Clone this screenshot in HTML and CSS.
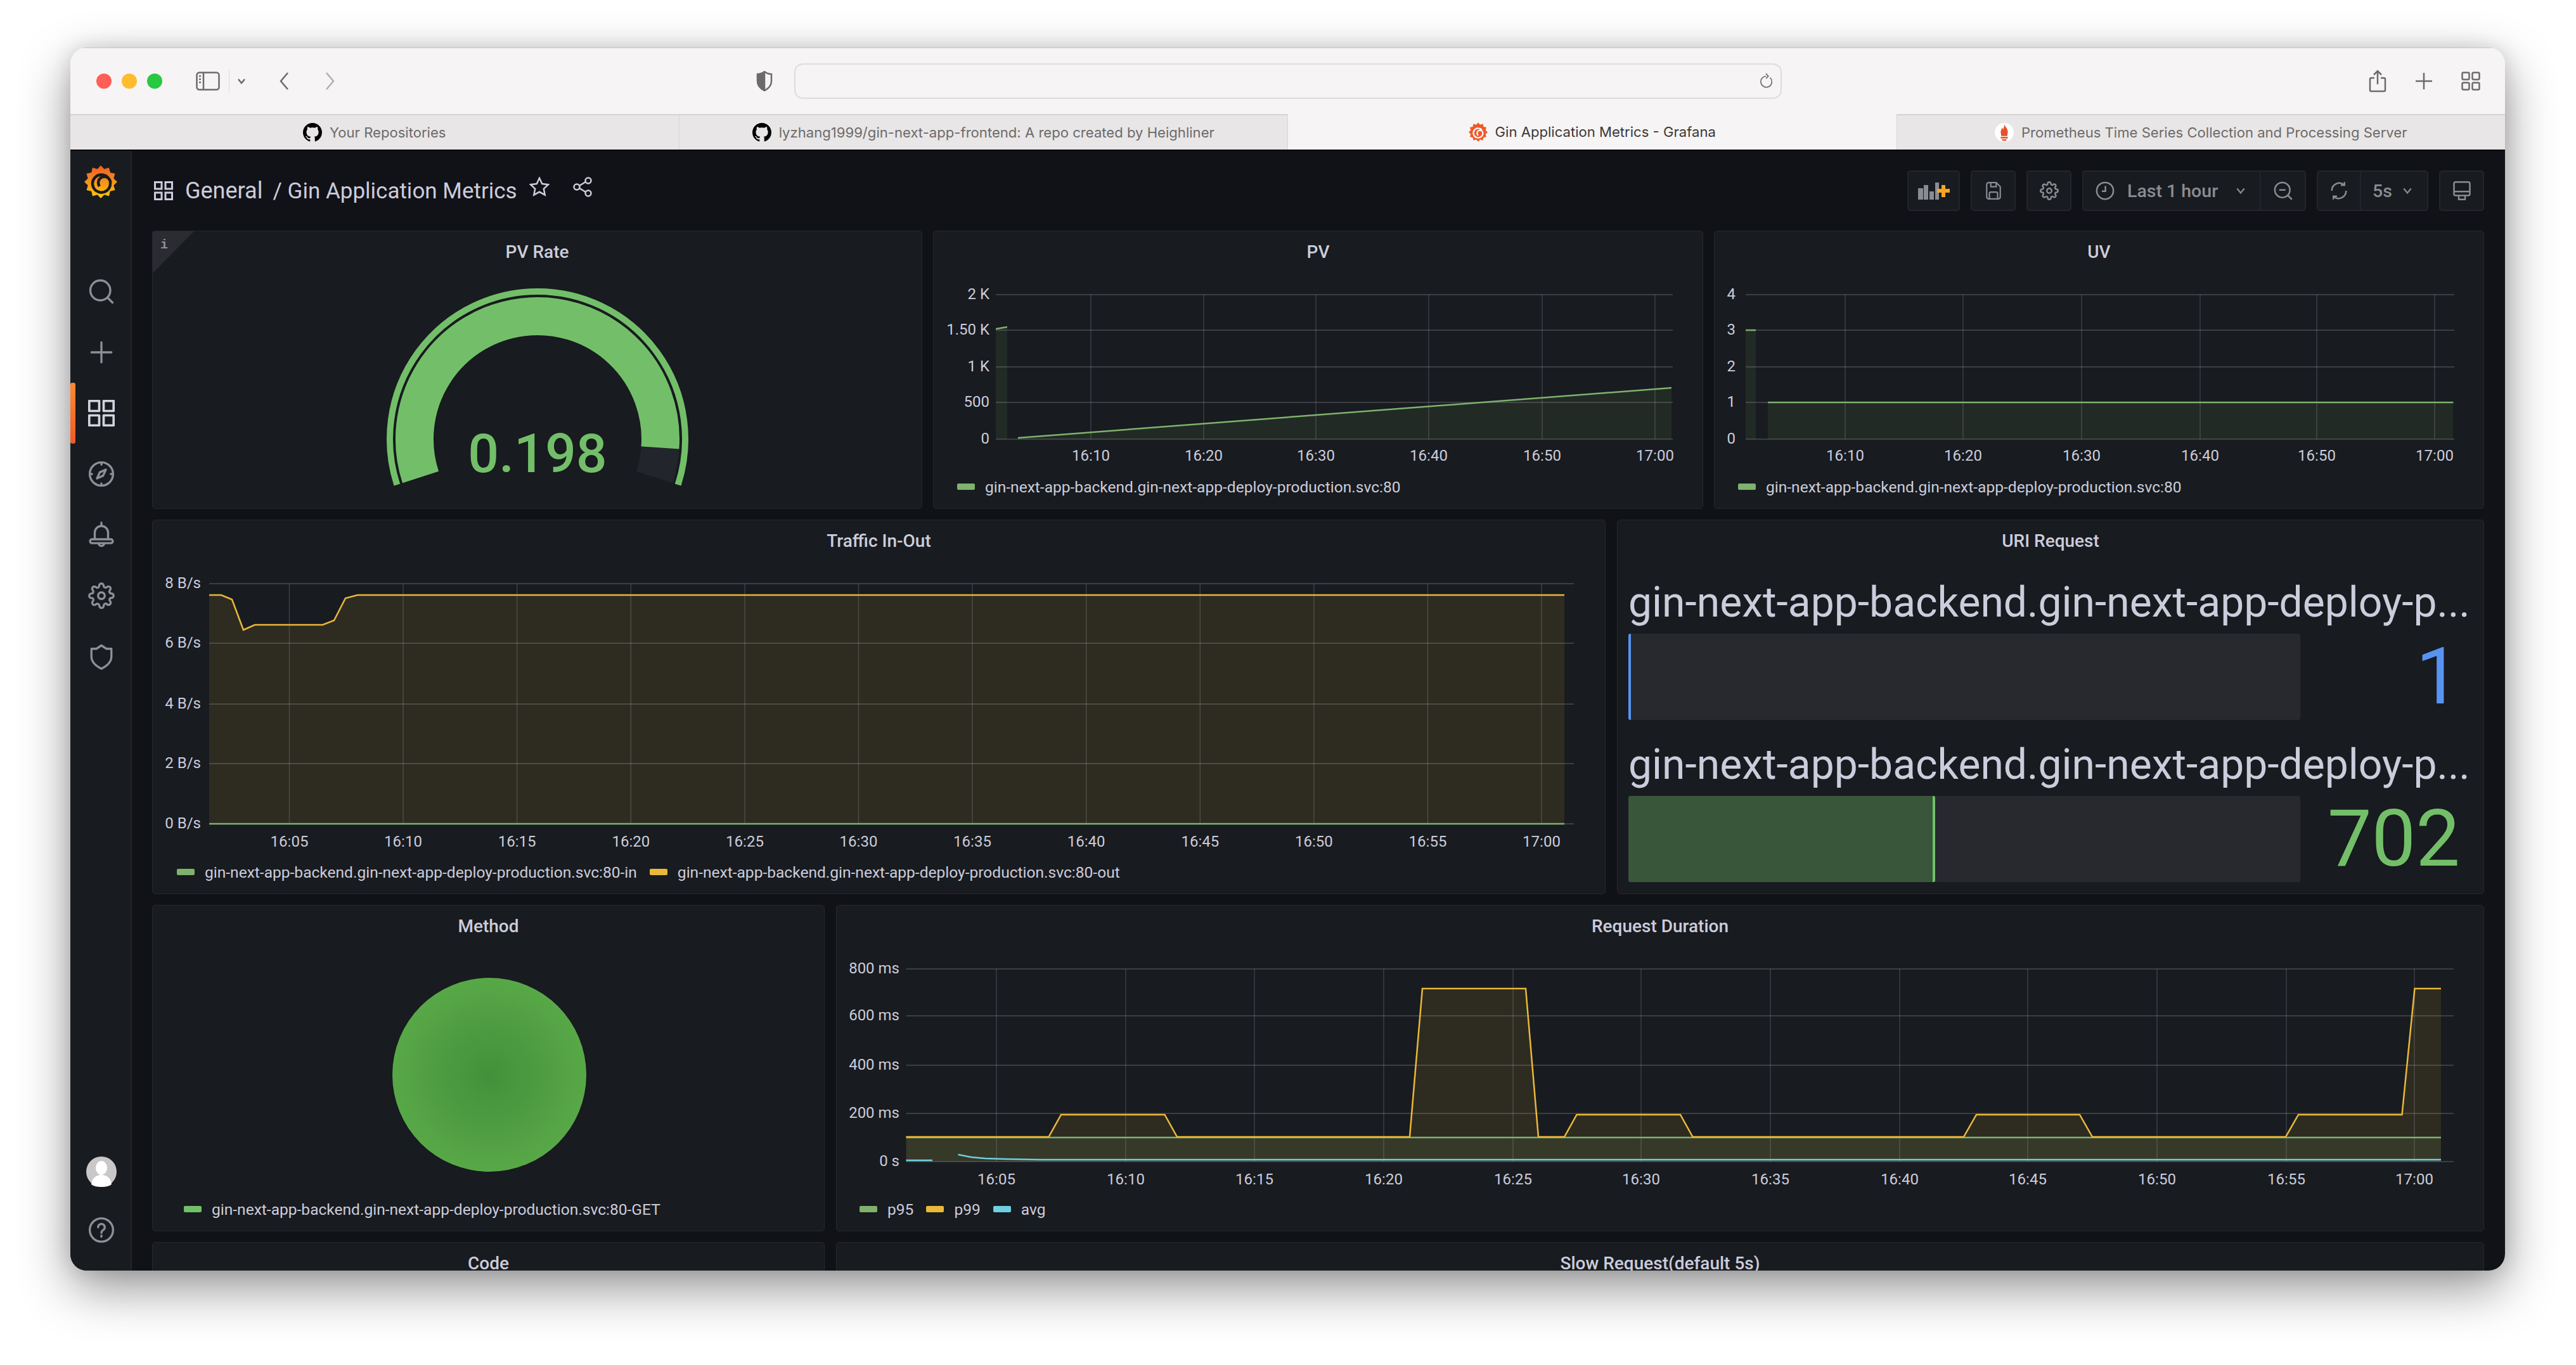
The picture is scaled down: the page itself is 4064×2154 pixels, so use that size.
FILE: index.html

```html
<!DOCTYPE html>
<html lang="en">
<head>
    <meta charset="UTF-8">
    <title>Gin Application Metrics - Grafana</title>
    <link rel="stylesheet" href="styles.css">
</head>
<body>
<div class="window">
    <!-- browser toolbar -->
    <div class="toolbar">
        <span class="light red"></span>
        <span class="light yellow"></span>
        <span class="light green"></span>
        <svg class="tb-sidebar" viewBox="0 0 38 30"><rect x="1.5" y="1.5" width="35" height="27" rx="4"/><path d="M12 2v26M5 7h3M5 12h3M5 17h3"/></svg>
        <span class="tb-sep"></span>
        <svg class="tb-chev" viewBox="0 0 14 10"><path d="M2 2l5 6 5-6"/></svg>
        <svg class="tb-back" viewBox="0 0 18 30"><path d="M15 2L4 15l11 13"/></svg>
        <svg class="tb-forward" viewBox="0 0 18 30"><path d="M3 2l11 13L3 28"/></svg>
        <svg class="tb-shield" viewBox="0 0 26 32"><path class="solid" d="M13 1C9 4 5 5 2 5v11c0 7 5 12 11 15z"/><path d="M13 1c4 3 8 4 11 4v11c0 7-5 12-11 15"/></svg>
        <div class="address">
            <svg class="tb-reload" viewBox="0 0 24 28"><path d="M18 8a9.500 9.500 0 1 1-7-2.500M11 1l4 4.500-4 4"/></svg>
        </div>
        <svg class="tb-share" viewBox="0 0 28 36"><path d="M14 23V2M8 8l6-6 6 6M9 13H4a2 2 0 0 0-2 2v17a2 2 0 0 0 2 2h20a2 2 0 0 0 2-2V15a2 2 0 0 0-2-2h-5"/></svg>
        <svg class="tb-plus" viewBox="0 0 30 30"><path d="M15 2v26M2 15h26"/></svg>
        <svg class="tb-grid" viewBox="0 0 30 30"><rect x="1.500" y="1.500" width="11" height="11" rx="2"/><rect x="17.500" y="1.500" width="11" height="11" rx="2"/><rect x="1.500" y="17.500" width="11" height="11" rx="2"/><rect x="17.500" y="17.500" width="11" height="11" rx="2"/></svg>
    </div>

    <!-- browser tabs -->
    <div class="tabs">
        <div class="tab">
            <svg class="tab-icon" viewBox="0 0 16 16"><path d="M8 0C3.58 0 0 3.58 0 8c0 3.54 2.29 6.53 5.47 7.59.4.07.55-.17.55-.38 0-.19-.01-.82-.01-1.49-2.01.37-2.53-.49-2.69-.94-.09-.23-.48-.94-.82-1.13-.28-.15-.68-.52-.01-.53.63-.01 1.08.58 1.23.82.72 1.21 1.87.87 2.33.66.07-.52.28-.87.51-1.07-1.78-.2-3.64-.89-3.64-3.95 0-.87.31-1.59.82-2.15-.08-.2-.36-1.02.08-2.12 0 0 .67-.21 2.2.82.64-.18 1.32-.27 2-.27.68 0 1.36.09 2 .27 1.53-1.04 2.2-.82 2.2-.82.44 1.1.16 1.92.08 2.12.51.56.82 1.27.82 2.15 0 3.07-1.87 3.75-3.65 3.95.29.25.54.73.54 1.48 0 1.07-.01 1.93-.01 2.2 0 .21.15.46.55.38A8.013 8.013 0 0016 8c0-4.420-3.580-8-8-8z"/></svg>
            Your Repositories
        </div>
        <div class="tab">
            <svg class="tab-icon" viewBox="0 0 16 16"><path d="M8 0C3.58 0 0 3.58 0 8c0 3.54 2.29 6.53 5.47 7.59.4.07.55-.17.55-.38 0-.19-.01-.82-.01-1.49-2.01.37-2.53-.49-2.69-.94-.09-.23-.48-.94-.82-1.13-.28-.15-.68-.52-.01-.53.63-.01 1.08.58 1.23.82.72 1.21 1.87.87 2.33.66.07-.52.28-.87.51-1.07-1.78-.2-3.64-.89-3.64-3.95 0-.87.31-1.59.82-2.15-.08-.2-.36-1.02.08-2.12 0 0 .67-.21 2.2.82.64-.18 1.32-.27 2-.27.68 0 1.36.09 2 .27 1.53-1.04 2.2-.82 2.2-.82.44 1.1.16 1.92.08 2.12.51.56.82 1.27.82 2.15 0 3.07-1.87 3.75-3.65 3.95.29.25.54.73.54 1.48 0 1.07-.01 1.93-.01 2.2 0 .21.15.46.55.38A8.013 8.013 0 0016 8c0-4.420-3.580-8-8-8z"/></svg>
            lyzhang1999/gin-next-app-frontend: A repo created by Heighliner
        </div>
        <div class="tab active">
            <svg class="tab-logo" viewBox="0 0 52 54"><polygon class="logo-flat" points="26,2 31.400,7.700 39,5.500 40.800,13.200 48.500,15 46.300,22.600 52,28 46.300,33.400 48.500,41 40.800,42.800 39,50.500 31.400,48.300 26,54 20.600,48.300 13,50.500 11.200,42.800 3.500,41 5.700,33.400 0,28 5.700,22.600 3.500,15 11.200,13.200 13,5.500 20.600,7.700"/><path class="logo-swirl-flat" d="M36 22A13 13 0 1 0 39 31A8 8 0 1 0 26 37"/></svg>
            Gin Application Metrics - Grafana
        </div>
        <div class="tab">
            <svg class="tab-icon" viewBox="0 0 32 32"><circle class="prom-bg" cx="16" cy="16" r="16"/><path class="prom-flame" d="M16 2c1 4 6 7 6 13 0 3-1 5-1 7H11c0-2-1-4-1-7 0-3 2-4 2-7 1 1 2 2 2 3 1-2 2-5 2-9zM10 23.500h12v2.500H10zM12 27.500h8l-1 2.500h-6z"/></svg>
            Prometheus Time Series Collection and Processing Server
        </div>
    </div>

    <div class="app">
        <!-- grafana side menu -->
        <nav class="sidebar">
            <div class="side-logo">
                <svg class="logo" viewBox="0 0 52 54">
                    <defs><linearGradient id="logoGrad" x1="0" y1="0" x2="0" y2="1"><stop offset="0" stop-color="#f05a28"/><stop offset="1" stop-color="#fbca0a"/></linearGradient></defs>
                    <polygon fill="url(#logoGrad)" points="26,2 31.400,7.700 39,5.500 40.800,13.200 48.500,15 46.300,22.600 52,28 46.300,33.400 48.500,41 40.800,42.800 39,50.500 31.400,48.300 26,54 20.600,48.300 13,50.500 11.200,42.800 3.500,41 5.700,33.400 0,28 5.700,22.600 3.500,15 11.200,13.200 13,5.500 20.600,7.700"/>
                    <path class="logo-hole" d="M38 22A14 14 0 1 0 41 31A9.500 9.500 0 1 0 24 35"/>
                </svg>
            </div>
            <div class="side-item"><svg class="side-icon" viewBox="0 0 24 24"><circle cx="11" cy="11" r="9"/><path d="M17.500 17.500L22 22"/></svg></div>
            <div class="side-item"><svg class="side-icon" viewBox="0 0 24 24"><path d="M12 3v18M3 12h18"/></svg></div>
            <div class="side-item active"><svg class="side-icon" viewBox="0 0 24 24"><rect x="1" y="1" width="9" height="9"/><rect x="14" y="1" width="9" height="9"/><rect x="1" y="14" width="9" height="9"/><rect x="14" y="14" width="9" height="9"/></svg></div>
            <div class="side-item"><svg class="side-icon" viewBox="0 0 24 24"><circle cx="12" cy="12" r="10.500"/><path d="M16 8l-2.500 5.500L8 16l2.500-5.500zM12 1.500v2M12 20.500v2M1.500 12h2M20.500 12h2"/></svg></div>
            <div class="side-item"><svg class="side-icon" viewBox="0 0 24 24"><path d="M12 1v2.500M6 16v-6a6 6 0 0 1 12 0v6M3.500 16h17a1.500 1.500 0 0 1 0 3.500h-17a1.500 1.500 0 0 1 0-3.500zM9.500 19.500a2.500 2.500 0 0 0 5 0"/></svg></div>
            <div class="side-item"><svg class="side-icon" viewBox="0 0 24 24"><circle cx="12" cy="12" r="3"/><path d="M19.400 15a1.650 1.650 0 0 0 .33 1.820l.06.06a2 2 0 0 1 0 2.830 2 2 0 0 1-2.830 0l-.06-.06a1.650 1.650 0 0 0-1.820-.33 1.650 1.650 0 0 0-1 1.510V21a2 2 0 0 1-2 2 2 2 0 0 1-2-2v-.09A1.650 1.650 0 0 0 9 19.400a1.650 1.650 0 0 0-1.820.33l-.06.06a2 2 0 0 1-2.830 0 2 2 0 0 1 0-2.830l.06-.06a1.650 1.650 0 0 0 .33-1.820 1.650 1.650 0 0 0-1.510-1H3a2 2 0 0 1-2-2 2 2 0 0 1 2-2h.09A1.650 1.650 0 0 0 4.600 9a1.650 1.650 0 0 0-.33-1.820l-.06-.06a2 2 0 0 1 0-2.830 2 2 0 0 1 2.830 0l.06.06a1.650 1.650 0 0 0 1.820.33H9a1.650 1.650 0 0 0 1-1.510V3a2 2 0 0 1 2-2 2 2 0 0 1 2 2v.09a1.650 1.650 0 0 0 1 1.510 1.650 1.650 0 0 0 1.820-.33l.06-.06a2 2 0 0 1 2.830 0 2 2 0 0 1 0 2.830l-.06.06a1.650 1.650 0 0 0-.33 1.820V9a1.650 1.650 0 0 0 1.510 1H21a2 2 0 0 1 2 2 2 2 0 0 1-2 2h-.09a1.650 1.650 0 0 0-1.510 1z"/></svg></div>
            <div class="side-item"><svg class="side-icon" viewBox="0 0 24 24"><path d="M12 23c-6-3-9-7-9-11V5l4.500 0L12 2l4.500 3L21 5v7c0 4-3 8-9 11z"/></svg></div>
            <div class="side-spacer"></div>
            <div class="side-item side-avatar"><svg class="avatar" viewBox="0 0 48 48"><circle class="avatar-bg" cx="24" cy="24" r="24"/><ellipse class="avatar-fg" cx="24" cy="18" rx="9" ry="11"/><path class="avatar-fg" d="M8 44c1-10 8-15 16-15s15 5 16 15c-4 3-10 4-16 4s-12-1-16-4z"/></svg></div>
            <div class="side-item"><svg class="side-icon" viewBox="0 0 24 24"><circle cx="12" cy="12" r="10.500"/><path d="M9 9.500a3 3 0 1 1 4.500 2.600c-1 .6-1.500 1.200-1.500 2.400M12 17v1"/></svg></div>
        </nav>

        <div class="main">
            <!-- dashboard header -->
            <header class="dash-header">
                <svg class="head-apps" viewBox="0 0 30 30"><rect x="1.500" y="1.500" width="10.500" height="10.500"/><rect x="18" y="1.500" width="10.500" height="10.500"/><rect x="1.500" y="18" width="10.500" height="10.500"/><rect x="18" y="18" width="10.500" height="10.500"/></svg>
                <span class="crumb">General</span>
                <span class="crumb-title">/ Gin Application Metrics</span>
                <svg class="head-star" viewBox="0 0 32 32"><path d="M16 2l4.200 9 9.800 1.200-7.200 6.700 1.900 9.700L16 23.800l-8.700 4.800 1.900-9.700L2 12.200 11.800 11z"/></svg>
                <svg class="head-share" viewBox="0 0 30 32"><circle cx="6" cy="16" r="4.500"/><circle cx="24" cy="6" r="4.500"/><circle cx="24" cy="26" r="4.500"/><path d="M10 14l10-6M10 18l10 6"/></svg>
                <div class="head-actions">
                    <div class="btn btn-add">
                        <svg class="btn-icon-add" viewBox="0 0 50 28"><path class="add-bars" d="M0 10h8v18H0zM9 5h7v23H9zM18 15h7v13h-7zM27 1h6v27h-6z"/><path class="add-plus" d="M37 5h6v6h7v6h-7v7h-6v-7h-7v-6h7z"/></svg>
                    </div>
                    <div class="btn btn-sq"><svg class="btn-icon" viewBox="0 0 24 28"><path d="M2 5a3 3 0 0 1 3-3h11l6 6v15a3 3 0 0 1-3 3H5a3 3 0 0 1-3-3zM8 2v6h8V2M6 26v-8a2 2 0 0 1 2-2h8a2 2 0 0 1 2 2v8"/></svg></div>
                    <div class="btn btn-sq"><svg class="btn-icon" viewBox="0 0 24 24"><circle cx="12" cy="12" r="3"/><path d="M19.400 15a1.650 1.650 0 0 0 .33 1.820l.06.06a2 2 0 0 1 0 2.830 2 2 0 0 1-2.830 0l-.06-.06a1.650 1.650 0 0 0-1.820-.33 1.650 1.650 0 0 0-1 1.510V21a2 2 0 0 1-2 2 2 2 0 0 1-2-2v-.09A1.650 1.650 0 0 0 9 19.400a1.650 1.650 0 0 0-1.820.33l-.06.06a2 2 0 0 1-2.830 0 2 2 0 0 1 0-2.830l.06-.06a1.650 1.650 0 0 0 .33-1.820 1.650 1.650 0 0 0-1.510-1H3a2 2 0 0 1-2-2 2 2 0 0 1 2-2h.09A1.650 1.650 0 0 0 4.600 9a1.650 1.650 0 0 0-.33-1.820l-.06-.06a2 2 0 0 1 0-2.830 2 2 0 0 1 2.830 0l.06.06a1.650 1.650 0 0 0 1.820.33H9a1.650 1.650 0 0 0 1-1.510V3a2 2 0 0 1 2-2 2 2 0 0 1 2 2v.09a1.650 1.650 0 0 0 1 1.510 1.650 1.650 0 0 0 1.820-.33l.06-.06a2 2 0 0 1 2.830 0 2 2 0 0 1 0 2.830l-.06.06a1.650 1.650 0 0 0-.33 1.820V9a1.650 1.650 0 0 0 1.510 1H21a2 2 0 0 1 2 2 2 2 0 0 1-2 2h-.09a1.650 1.650 0 0 0-1.510 1z"/></svg></div>
                    <div class="btn-group">
                        <div class="btn-part btn-time">
                            <svg class="btn-icon" viewBox="0 0 24 24"><circle cx="12" cy="12" r="10.500"/><path d="M12.500 6v6.500H8"/></svg>
                            <span class="btn-text">Last 1 hour</span>
                            <svg class="btn-chev" viewBox="0 0 14 10"><path d="M2 2l5 6 5-6"/></svg>
                        </div>
                        <div class="btn-part btn-zoom"><svg class="btn-icon" viewBox="0 0 24 24"><circle cx="11" cy="11" r="9.500"/><path d="M18 18l5 5M7 11h8"/></svg></div>
                    </div>
                    <div class="btn-group">
                        <div class="btn-part btn-refresh"><svg class="btn-icon" viewBox="0 0 24 24"><path d="M21 12a9.500 9.500 0 0 1-15.500 7.500M3 12A9.500 9.500 0 0 1 18.500 4.500M5 23v-4h4.500M19 1v4h-4.500"/></svg></div>
                        <div class="btn-part btn-interval">
                            <span class="btn-text">5s</span>
                            <svg class="btn-chev" viewBox="0 0 14 10"><path d="M2 2l5 6 5-6"/></svg>
                        </div>
                    </div>
                    <div class="btn btn-sq"><svg class="btn-icon" viewBox="0 0 24 24"><path d="M4 1h16a2 2 0 0 1 2 2v13a2 2 0 0 1-2 2H4a2 2 0 0 1-2-2V3a2 2 0 0 1 2-2zM2 13h20M8 18v5h8v-5"/></svg></div>
                </div>
            </header>

            <!-- row 1 -->
            <div class="row row-top">
                <section class="panel">
                    <span class="info-corner"></span>
                    <span class="info-mark">i</span>
                    <h3 class="panel-title">PV Rate</h3>
                    <svg class="chart chart-gauge" viewBox="241 431 1213 371">
                        <path class="gauge-thresh" d="M626.400 765A233 233 0 1 1 1069.600 765"/>
                        <path class="gauge-rest" d="M1041.500 706.500A194 194 0 0 1 1032.500 753"/>
                        <path class="gauge-value-arc" d="M663.500 753A194 194 0 1 1 1041.500 706.500"/>
                        <text class="gauge-value" x="848" y="745">0.198</text>
                    </svg>
                </section>

                <section class="panel">
                    <h3 class="panel-title">PV</h3>
                    <svg class="chart chart-small" viewBox="1473 431 1213 314">
                        <path class="fill-green" d="M1606 691L2637 612V693H1606zM1571 519L1589 516V693H1571z"/>
                        <path class="grid-h" d="M1571 465H2639M1571 521H2639M1571 579H2639M1571 635H2639M1571 693H2639"/>
                        <path class="grid-v" d="M1721 465V693M1899 465V693M2076 465V693M2254 465V693M2433 465V693M2611 465V693"/>
                        <path class="line-green" d="M1606 691L2637 612M1571 519L1589 516"/>
                        <text class="axis-y" x="1561" y="472">2 K</text>
                        <text class="axis-y" x="1561" y="528">1.50 K</text>
                        <text class="axis-y" x="1561" y="586">1 K</text>
                        <text class="axis-y" x="1561" y="642">500</text>
                        <text class="axis-y" x="1561" y="700">0</text>
                        <text class="axis-x" x="1721" y="727">16:10</text>
                        <text class="axis-x" x="1899" y="727">16:20</text>
                        <text class="axis-x" x="2076" y="727">16:30</text>
                        <text class="axis-x" x="2254" y="727">16:40</text>
                        <text class="axis-x" x="2433" y="727">16:50</text>
                        <text class="axis-x" x="2611" y="727">17:00</text>
                    </svg>
                    <div class="legend legend-pv">
                        <span class="swatch sw-green"></span>
                        <span>gin-next-app-backend.gin-next-app-deploy-production.svc:80</span>
                    </div>
                </section>

                <section class="panel">
                    <h3 class="panel-title">UV</h3>
                    <svg class="chart chart-small" viewBox="2705 431 1213 314">
                        <path class="fill-green" d="M2789 635H3870V693H2789zM2754 521H2770V693H2754z"/>
                        <path class="grid-h" d="M2754 465H3872M2754 521H3872M2754 579H3872M2754 635H3872M2754 693H3872"/>
                        <path class="grid-v" d="M2911 465V693M3097 465V693M3284 465V693M3471 465V693M3655 465V693M3841 465V693"/>
                        <path class="line-green" d="M2789 635H3870M2754 521H2770"/>
                        <text class="axis-y" x="2738" y="472">4</text>
                        <text class="axis-y" x="2738" y="528">3</text>
                        <text class="axis-y" x="2738" y="586">2</text>
                        <text class="axis-y" x="2738" y="642">1</text>
                        <text class="axis-y" x="2738" y="700">0</text>
                        <text class="axis-x" x="2911" y="727">16:10</text>
                        <text class="axis-x" x="3097" y="727">16:20</text>
                        <text class="axis-x" x="3284" y="727">16:30</text>
                        <text class="axis-x" x="3471" y="727">16:40</text>
                        <text class="axis-x" x="3655" y="727">16:50</text>
                        <text class="axis-x" x="3841" y="727">17:00</text>
                    </svg>
                    <div class="legend legend-pv">
                        <span class="swatch sw-green"></span>
                        <span>gin-next-app-backend.gin-next-app-deploy-production.svc:80</span>
                    </div>
                </section>
            </div>

            <!-- row 2 -->
            <div class="row row-mid">
                <section class="panel">
                    <h3 class="panel-title">Traffic In-Out</h3>
                    <svg class="chart chart-traffic" viewBox="241 887 2291 465">
                        <path class="fill-yellow" d="M330 939H349L366 946L384 994L402 986H509L527 979L545 944L564 939H2468V1300H330z"/>
                        <path class="grid-h" d="M330 921H2483M330 1015H2483M330 1111H2483M330 1205H2483"/>
                        <path class="grid-v" d="M456.500 921V1300M636 921V1300M815.700 921V1300M995.300 921V1300M1175 921V1300M1354.500 921V1300M1534 921V1300M1713.700 921V1300M1893.300 921V1300M2072.900 921V1300M2252.500 921V1300M2432 921V1300"/>
                        <path class="line-yellow" d="M330 939H349L366 946L384 994L402 986H509L527 979L545 944L564 939H2468"/>
                        <path class="line-green" d="M330 1300H2468"/>
                        <path class="grid-h" d="M2468 1300H2483"/>
                        <text class="axis-y" x="317" y="928">8 B/s</text>
                        <text class="axis-y" x="317" y="1022">6 B/s</text>
                        <text class="axis-y" x="317" y="1118">4 B/s</text>
                        <text class="axis-y" x="317" y="1212">2 B/s</text>
                        <text class="axis-y" x="317" y="1307">0 B/s</text>
                        <text class="axis-x" x="456.500" y="1336">16:05</text>
                        <text class="axis-x" x="636" y="1336">16:10</text>
                        <text class="axis-x" x="815.700" y="1336">16:15</text>
                        <text class="axis-x" x="995.300" y="1336">16:20</text>
                        <text class="axis-x" x="1175" y="1336">16:25</text>
                        <text class="axis-x" x="1354.500" y="1336">16:30</text>
                        <text class="axis-x" x="1534" y="1336">16:35</text>
                        <text class="axis-x" x="1713.700" y="1336">16:40</text>
                        <text class="axis-x" x="1893.300" y="1336">16:45</text>
                        <text class="axis-x" x="2072.900" y="1336">16:50</text>
                        <text class="axis-x" x="2252.500" y="1336">16:55</text>
                        <text class="axis-x" x="2432" y="1336">17:00</text>
                    </svg>
                    <div class="legend legend-traffic">
                        <span class="swatch sw-green"></span>
                        <span>gin-next-app-backend.gin-next-app-deploy-production.svc:80-in</span>
                        <span class="swatch sw-yellow"></span>
                        <span>gin-next-app-backend.gin-next-app-deploy-production.svc:80-out</span>
                    </div>
                </section>

                <section class="panel">
                    <h3 class="panel-title">URI Request</h3>
                    <div class="bar-list">
                        <div class="bar-item">
                            <div class="bar-label">gin-next-app-backend.gin-next-app-deploy-p...</div>
                            <div class="bar-row">
                                <div class="bar-track"><div class="bar-fill bar-blue"></div></div>
                                <div class="bar-value value-blue">1</div>
                            </div>
                        </div>
                        <div class="bar-item">
                            <div class="bar-label">gin-next-app-backend.gin-next-app-deploy-p...</div>
                            <div class="bar-row">
                                <div class="bar-track"><div class="bar-fill bar-green" style="width: 45.700%"></div></div>
                                <div class="bar-value value-green">702</div>
                            </div>
                        </div>
                    </div>
                </section>
            </div>

            <!-- row 3 -->
            <div class="row row-low">
                <section class="panel">
                    <h3 class="panel-title">Method</h3>
                    <svg class="chart chart-pie" viewBox="241 1495 1059 387">
                        <defs><radialGradient id="pieGrad"><stop offset="0" stop-color="#42903a"/><stop offset="0.650" stop-color="#519f43"/><stop offset="1" stop-color="#58a847"/></radialGradient></defs>
                        <circle fill="url(#pieGrad)" cx="772" cy="1696" r="153"/>
                    </svg>
                    <div class="legend legend-method">
                        <span class="swatch sw-pie"></span>
                        <span>gin-next-app-backend.gin-next-app-deploy-production.svc:80-GET</span>
                    </div>
                </section>

                <section class="panel">
                    <h3 class="panel-title">Request Duration</h3>
                    <svg class="chart chart-duration" viewBox="1320 1495 2598 389">
                        <path class="fill-yellow" d="M1429.500 1794H1654.500L1674 1759H1837.500L1857 1794H2224L2244 1560H2407L2427 1794H2468L2487.500 1759H2651L2670.500 1794H3098L3118 1759H3281L3301 1794H3606L3626 1759H3789.500L3809.500 1560H3851V1833H1429.500z"/>
                        <path class="fill-green" d="M1429.500 1795H3851V1833H1429.500z"/>
                        <path class="grid-h" d="M1429.500 1529H3871M1429.500 1603H3871M1429.500 1681H3871M1429.500 1757H3871M1429.500 1833H3871"/>
                        <path class="grid-v" d="M1572 1529V1833M1776 1529V1833M1979 1529V1833M2183 1529V1833M2387 1529V1833M2589 1529V1833M2793 1529V1833M2997 1529V1833M3199 1529V1833M3403 1529V1833M3607 1529V1833M3809 1529V1833"/>
                        <path class="line-green" d="M1429.500 1795H3851"/>
                        <path class="line-yellow" d="M1429.500 1794H1654.500L1674 1759H1837.500L1857 1794H2224L2244 1560H2407L2427 1794H2468L2487.500 1759H2651L2670.500 1794H3098L3118 1759H3281L3301 1794H3606L3626 1759H3789.500L3809.500 1560H3851"/>
                        <path class="line-cyan" d="M1429.500 1831H1471M1511.600 1822L1532 1826L1554 1828L1586 1829L1640 1830H3851"/>
                        <text class="axis-y" x="1419" y="1536">800 ms</text>
                        <text class="axis-y" x="1419" y="1610">600 ms</text>
                        <text class="axis-y" x="1419" y="1688">400 ms</text>
                        <text class="axis-y" x="1419" y="1764">200 ms</text>
                        <text class="axis-y" x="1419" y="1840">0 s</text>
                        <text class="axis-x" x="1572" y="1869">16:05</text>
                        <text class="axis-x" x="1776" y="1869">16:10</text>
                        <text class="axis-x" x="1979" y="1869">16:15</text>
                        <text class="axis-x" x="2183" y="1869">16:20</text>
                        <text class="axis-x" x="2387" y="1869">16:25</text>
                        <text class="axis-x" x="2589" y="1869">16:30</text>
                        <text class="axis-x" x="2793" y="1869">16:35</text>
                        <text class="axis-x" x="2997" y="1869">16:40</text>
                        <text class="axis-x" x="3199" y="1869">16:45</text>
                        <text class="axis-x" x="3403" y="1869">16:50</text>
                        <text class="axis-x" x="3607" y="1869">16:55</text>
                        <text class="axis-x" x="3809" y="1869">17:00</text>
                    </svg>
                    <div class="legend legend-duration">
                        <span class="swatch sw-green"></span>
                        <span>p95</span>
                        <span class="swatch sw-yellow"></span>
                        <span>p99</span>
                        <span class="swatch sw-cyan"></span>
                        <span>avg</span>
                    </div>
                </section>
            </div>

            <!-- row 4, cut off by the window -->
            <div class="row row-low">
                <section class="panel"><h3 class="panel-title">Code</h3></section>
                <section class="panel"><h3 class="panel-title">Slow Request(default 5s)</h3></section>
            </div>
        </div>
    </div>
</div>
</body>
</html>
```

FILE: styles.css

```css
* {
    box-sizing: border-box;
}

html, body {
    margin: 0;
    height: 2154px;
    overflow: hidden;
    background: #fff;
}

body {
    padding: 75px 112px 0 111px;
    font-family: Roboto, "Liberation Sans", sans-serif;
}

svg {
    display: block;
    flex: none;
}

.window {
    width: 3841px;
    height: 1930px;
    display: flex;
    flex-direction: column;
    border-radius: 26px;
    overflow: hidden;
    box-shadow: 0 28px 80px rgba(0, 0, 0, 0.42), 0 0 30px rgba(0, 0, 0, 0.12);
}

/* browser chrome */
.toolbar {
    height: 105px;
    display: flex;
    align-items: center;
    padding-left: 41px;
    background: #f6f4f4;
    border-top: 1px solid #c9c7c7;
}

.toolbar svg {
    fill: none;
    stroke: #6c6a6b;
    stroke-width: 2.5;
}

.light {
    width: 24px;
    height: 24px;
    border-radius: 50%;
    margin-right: 16px;
}

.red { background: #ff5f57; }
.yellow { background: #febc2e; }
.green { background: #28c840; }

.tb-sidebar { width: 38px; height: 30px; margin-left: 37px; }
.tb-sep { width: 1px; height: 36px; margin-left: 14px; background: #dcdada; }
.tb-chev { width: 14px; height: 10px; margin-left: 12px; }
.tb-back { width: 18px; height: 30px; margin-left: 51px; }
.tb-forward { width: 18px; height: 30px; margin-left: 55px; opacity: 0.5; }
.tb-shield { width: 26px; height: 32px; margin-left: 663px; }
.toolbar .solid { fill: #6c6a6b; }

.address {
    width: 1558px;
    height: 56px;
    margin-left: 34px;
    display: flex;
    align-items: center;
    justify-content: flex-end;
    padding-right: 11px;
    border: 2px solid #dddbdb;
    border-radius: 14px;
}

.toolbar .tb-reload { width: 22px; height: 26px; stroke-width: 1.800; }
.tb-share { width: 28px; height: 36px; margin-left: 926px; }
.tb-plus { width: 30px; height: 30px; margin-left: 44px; }
.tb-grid { width: 30px; height: 30px; margin-left: 44px; }

.tabs {
    height: 56px;
    display: flex;
}

.tab {
    flex: 1;
    display: flex;
    align-items: center;
    justify-content: center;
    gap: 12px;
    font-family: Inter, "Liberation Sans", sans-serif;
    font-size: 22.100px;
    color: #6c6a6b;
    background: #e8e6e6;
    border-top: 2px solid #d4d2d2;
    border-left: 1px solid #d8d6d6;
}

.tab:first-child {
    border-left: none;
}

.tab.active {
    color: #3b393a;
    background: #f6f4f4;
    border-top: none;
}

.tab-icon { width: 30px; height: 30px; }
.tab-logo { width: 30px; height: 32px; }
.logo-flat { fill: #f05a28; }
.logo-swirl-flat { fill: none; stroke: #f6f4f4; stroke-width: 4; }
.prom-bg { fill: #fff; }
.prom-flame { fill: #e6522c; }

/* grafana */
.app {
    flex: 1;
    min-height: 0;
    display: flex;
    background: #111217;
    border-top: 2px solid #000;
}

.sidebar {
    width: 97px;
    display: flex;
    flex-direction: column;
    padding-bottom: 16px;
    background: #181b1f;
    border-right: 2px solid #22252b;
}

.side-logo {
    height: 174px;
    padding: 21px 0 0 22px;
}

.logo { width: 52px; height: 54px; }
.logo-hole { fill: none; stroke: #181b1f; stroke-width: 4.500; }

.side-item {
    position: relative;
    height: 96px;
    flex: none;
    display: flex;
    align-items: center;
    justify-content: center;
    padding-left: 3px;
}

.side-avatar {
    height: 88px;
}

.side-spacer {
    flex: 1;
}

.side-icon {
    width: 42px;
    height: 42px;
    fill: none;
    stroke: #8e8f97;
    stroke-width: 1.900;
    stroke-linecap: round;
    stroke-linejoin: round;
}

.side-item.active .side-icon {
    stroke: #d3d3e0;
    stroke-width: 2.100;
}

.side-item.active::before {
    content: "";
    position: absolute;
    left: 0;
    top: 0;
    bottom: 0;
    width: 8px;
    border-radius: 3px;
    background: linear-gradient(#ff8833, #f05a28);
}

.avatar { width: 48px; height: 48px; }
.avatar-bg { fill: #c9c7c7; }
.avatar-fg { fill: #fff; }

.main {
    flex: 1;
    min-width: 0;
    padding: 0 33px 0 32px;
}

.dash-header {
    height: 126px;
    display: flex;
    align-items: center;
    padding-left: 3px;
    color: #ccccdc;
    font-size: 36px;
}

.head-apps { width: 30px; height: 30px; fill: none; stroke: #ccccdc; stroke-width: 3; }
.crumb { margin-left: 19px; margin-right: 16px; }
.crumb-title { font-size: 35px; }
.head-star { width: 32px; height: 32px; margin: -12px 0 0 19px; fill: none; stroke: #ccccdc; stroke-width: 2.500; }
.head-share { width: 30px; height: 32px; margin: -12px 0 0 37px; fill: none; stroke: #ccccdc; stroke-width: 2.500; }

.head-actions {
    margin-left: auto;
    display: flex;
    gap: 17px;
}

.btn, .btn-group {
    height: 64px;
    display: flex;
    align-items: center;
    background: #181b1f;
    border: 2px solid #22252b;
    border-radius: 5px;
}

.btn { justify-content: center; }
.btn-add { width: 83px; }
.btn-sq { width: 71px; }
.btn-part { height: 100%; display: flex; align-items: center; }
.btn-time { width: 280px; padding-left: 19px; border-right: 2px solid #22252b; }
.btn-zoom { width: 69px; justify-content: center; }
.btn-refresh { width: 68px; justify-content: center; border-right: 2px solid #22252b; }
.btn-interval { width: 104px; padding-left: 18px; }

.btn-icon {
    width: 30px;
    height: 30px;
    fill: none;
    stroke: #8b8c93;
    stroke-width: 2;
}

.btn-icon-add { width: 50px; height: 28px; }
.add-bars { fill: #8b8c93; }
.add-plus { fill: #f5a524; }

.btn-text {
    font-size: 28.500px;
    font-weight: 500;
    color: #8b8c93;
}

.btn-time .btn-text { margin-left: 20px; }
.btn-chev { width: 16px; height: 12px; margin-left: 28px; fill: none; stroke: #8b8c93; stroke-width: 2; }
.btn-interval .btn-chev { margin-left: 16px; }

/* panels */
.row {
    display: grid;
    gap: 17px;
    margin-bottom: 17px;
}

.row-top { grid-template-columns: repeat(3, 1fr); height: 439px; }
.row-mid { grid-template-columns: 2293px 1fr; gap: 18px; height: 591px; }
.row-low { grid-template-columns: 1061px 1fr; gap: 18px; height: 515px; }

.panel {
    position: relative;
    min-width: 0;
    display: flex;
    flex-direction: column;
    background: #181b1f;
    border: 1px solid #25282e;
    border-radius: 5px;
    color: #ccccdc;
}

.panel-title {
    height: 66px;
    margin: 0;
    line-height: 66px;
    text-align: center;
    font-size: 28px;
    font-weight: 500;
}

.info-corner {
    position: absolute;
    left: 0;
    top: 0;
    width: 65px;
    height: 66px;
    background: #2a2c32;
    clip-path: polygon(0 0, 100% 0, 0 100%);
}

.info-mark {
    position: absolute;
    left: 12px;
    top: 10px;
    font-family: "Liberation Mono", monospace;
    font-size: 20px;
    font-weight: 700;
    color: #8e8f97;
}

.chart { width: 100%; }
.chart-gauge { height: 371px; }
.chart-small { height: 314px; }
.chart-traffic { height: 465px; }
.chart-pie { height: 387px; }
.chart-duration { height: 389px; }

.grid-h { fill: none; stroke: rgba(204, 204, 220, 0.2); stroke-width: 2; }
.grid-v { fill: none; stroke: rgba(204, 204, 220, 0.2); stroke-width: 1.500; }
.fill-green { fill: rgba(126, 178, 109, 0.1); }
.fill-yellow { fill: rgba(234, 184, 57, 0.105); }
.line-green { fill: none; stroke: #7eb26d; stroke-width: 2.500; }
.line-yellow { fill: none; stroke: #eab839; stroke-width: 2.500; }
.line-cyan { fill: none; stroke: #6ed0e0; stroke-width: 2.500; }

.axis-y, .axis-x {
    font-family: Roboto, sans-serif;
    font-size: 24px;
    fill: #ccccdc;
}

.axis-y { text-anchor: end; }
.axis-x { text-anchor: middle; }

.legend {
    display: flex;
    align-items: center;
    height: 46px;
    font-size: 24.550px;
    white-space: nowrap;
}

.legend-pv { padding-left: 37px; }
.legend-traffic { height: 48px; padding-left: 38px; }
.legend-method { height: 52px; padding-left: 49px; }
.legend-duration { height: 48px; padding-left: 36px; }

.swatch {
    width: 28px;
    height: 10px;
    margin-right: 16px;
    border-radius: 2px;
}

.swatch ~ .swatch { margin-left: 20px; }
.sw-green { background: #7eb26d; }
.sw-yellow { background: #eab839; }
.sw-cyan { background: #6ed0e0; }
.sw-pie { background: #73bf69; }

.gauge-thresh { fill: none; stroke: #73bf69; stroke-width: 10; }
.gauge-rest { fill: none; stroke: #22252b; stroke-width: 60; }
.gauge-value-arc { fill: none; stroke: #73bf69; stroke-width: 60; }

.gauge-value {
    font-family: Roboto, sans-serif;
    font-size: 86px;
    font-weight: 500;
    text-anchor: middle;
    fill: #73bf69;
}

/* bar gauge */
.bar-list {
    padding-left: 17px;
}

.bar-item + .bar-item {
    margin-top: 7px;
}

.bar-label {
    height: 113px;
    padding-top: 31px;
    line-height: 66px;
    font-size: 66px;
    white-space: nowrap;
}

.bar-row {
    height: 136px;
    display: flex;
}

.bar-track {
    width: 1060px;
    background: #27292f;
    border-radius: 3px;
    overflow: hidden;
}

.bar-fill {
    height: 100%;
}

.bar-blue {
    width: 4px;
    background: #5794f2;
}

.bar-green {
    background: #39553a;
    border-right: 4px solid #73bf69;
    border-radius: 0 3px 3px 0;
}

.bar-value {
    flex: 1;
    padding-right: 37px;
    text-align: right;
    line-height: 136px;
    font-size: 124px;
}

.value-blue { color: #5794f2; }
.value-green { color: #73bf69; }
```
